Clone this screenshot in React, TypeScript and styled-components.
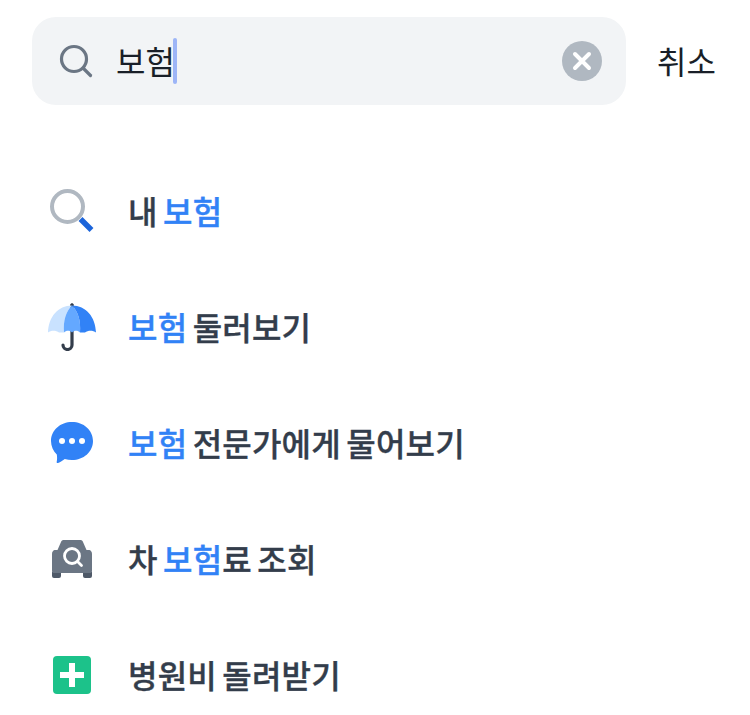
import styled, { createGlobalStyle } from 'styled-components';

const GlobalStyle = createGlobalStyle`
  html, body {
    margin: 0;
    background: #fff;
    overflow: hidden;
  }
  body {
    font-family: 'Noto Sans CJK KR', 'Noto Sans', sans-serif;
  }
`;

const BLUE = '#3182f6';

const LensIcon = () => (
  <svg width="48" height="48" viewBox="0 0 48 48">
    <circle cx="19.5" cy="19.5" r="15.5" fill="none" stroke="#b0b8c1" strokeWidth="4" />
    <path d="M32.5 32 L43.500 43" stroke="#1b64da" strokeWidth="5.500" />
  </svg>
);

const UmbrellaIcon = () => (
  <svg width="48" height="48" viewBox="0 0 48 48">
    <path d="M24 2 V42 a4.500 4.500 0 0 1 -9 0" fill="none" stroke="#333d4b" strokeWidth="3.200" strokeLinecap="round" />
    <circle cx="24" cy="1.800" r="1.600" fill="#333d4b" />
    <path d="M24 2.500 C10 2.500 0.500 14 0 29.500 C3 27 8 27 11 29.500 L16 29.500 C15 18 18 8 24 2.500 Z" fill="#c9e2ff" />
    <path d="M24 2.500 C18 8 15 18 16 29.500 C18 27 22 27 24 29.500 C26 27 30 27 32 29.500 C33 18 30 8 24 2.500 Z" fill="#64a8ff" />
    <path d="M24 2.500 C30 8 33 18 32 29.500 L37 29.500 C40 27 45 27 48 29.500 C47.500 14 38 2.500 24 2.500 Z" fill={BLUE} />
  </svg>
);

const ChatIcon = () => (
  <svg width="48" height="48" viewBox="0 0 48 48">
    <path d="M24 3 C35.500 3 45 11 45 22 C45 33 35.500 41 24 41 C21.500 41 19 40.600 16.800 40 C14.500 41.600 11.500 43.600 10 44 C9 44.300 8.500 43.600 8.700 42.800 C9.200 40.500 9.200 37.800 8.800 35.500 C5.300 32 3 27.300 3 22 C3 11 12.500 3 24 3 Z" fill={BLUE} />
    <circle cx="14" cy="22" r="3" fill="#fff" />
    <circle cx="24" cy="22" r="3" fill="#fff" />
    <circle cx="34" cy="22" r="3" fill="#fff" />
  </svg>
);

const CarIcon = () => (
  <svg width="48" height="48" viewBox="0 0 48 48">
    <path d="M4 37 H13 V41 a2 2 0 0 1 -2 2 H6 a2 2 0 0 1 -2 -2 Z M35 37 H44 V41 a2 2 0 0 1 -2 2 H37 a2 2 0 0 1 -2 -2 Z" fill="#4e5968" />
    <path d="M16 5 H32 C33.500 5 34.500 5.600 35 7 L38.500 15 H41.500 C43 15.500 44 17 44 19 V36 C44 37.500 43 38 42 38 H6 C5 38 4 37.500 4 36 V19 C4 17 5 15.500 6.500 15 H9.500 L13 7 C13.500 5.600 14.500 5 16 5 Z" fill="#6b7684" />
    <circle cx="24" cy="21" r="7.500" fill="none" stroke="#fff" strokeWidth="2.800" />
    <path d="M29.500 26.500 L33.500 30.500" stroke="#fff" strokeWidth="2.800" strokeLinecap="round" />
  </svg>
);

const PlusIcon = () => (
  <svg width="48" height="48" viewBox="0 0 48 48">
    <rect x="5" y="5" width="38" height="38" rx="4" fill="#1cc28a" />
    <rect x="12" y="21" width="24" height="6" fill="#fff" />
    <rect x="21" y="12" width="6" height="24" fill="#fff" />
  </svg>
);

const results = [
  { icon: <LensIcon />, parts: ['내 ', '보험', ''] },
  { icon: <UmbrellaIcon />, parts: ['', '보험', ' 둘러보기'] },
  { icon: <ChatIcon />, parts: ['', '보험', ' 전문가에게 물어보기'] },
  { icon: <CarIcon />, parts: ['차 ', '보험', '료 조회'] },
  { icon: <PlusIcon />, parts: ['병원비 돌려받기', '', ''] },
];

export default function App() {
  return (
    <Page>
      <GlobalStyle />
      <SearchHeader>
        <SearchBox>
          <svg width="40" height="40" viewBox="0 0 40 40">
            <circle cx="18" cy="18" r="12.500" fill="none" stroke="#6b7684" strokeWidth="3.200" />
            <path d="M27.500 27.500 L34.500 34.500" stroke="#6b7684" strokeWidth="3.200" strokeLinecap="round" />
          </svg>
          <Query>보험</Query>
          <Caret />
          <ClearButton>
            <svg width="40" height="40" viewBox="0 0 40 40">
              <circle cx="20" cy="20" r="20" fill="#b0b8c1" />
              <path d="M13 13 L27 27 M27 13 L13 27" stroke="#fff" strokeWidth="4" strokeLinecap="round" />
            </svg>
          </ClearButton>
        </SearchBox>
        <CancelButton>취소</CancelButton>
      </SearchHeader>
      <ResultList>
        {results.map(({ icon, parts }) => (
          <ResultRow key={parts.join('')}>
            <IconSlot>{icon}</IconSlot>
            <Label>
              {parts[0]}
              <Match>{parts[1]}</Match>
              {parts[2]}
            </Label>
          </ResultRow>
        ))}
      </ResultList>
    </Page>
  );
}

const Page = styled.div`
  width: 750px;
  height: 715px;
  overflow: hidden;
`;

const SearchHeader = styled.header`
  display: flex;
  align-items: center;
  padding: 17px 34px 0 32px;
`;

const SearchBox = styled.div`
  display: flex;
  align-items: center;
  flex: 1;
  height: 88px;
  padding: 0 24px;
  border-radius: 24px;
  background: #f2f4f6;
`;

const Query = styled.span`
  margin-left: 20px;
  padding-bottom: 2px;
  font-size: 32px;
  line-height: 44px;
  color: #191f28;
`;

const Caret = styled.span`
  width: 4px;
  height: 46px;
  margin-left: -2px;
  border-radius: 2px;
  background: #9db5f7;
`;

const ClearButton = styled.span`
  display: flex;
  margin-left: auto;
`;

const CancelButton = styled.span`
  margin-left: 31px;
  padding-bottom: 2px;
  font-size: 32px;
  line-height: 44px;
  color: #191f28;
`;

const ResultList = styled.ul`
  margin: 48px 0 0;
  padding: 0 0 0 48px;
  list-style: none;
`;

const ResultRow = styled.li`
  display: flex;
  align-items: center;
  gap: 32px;
  height: 116px;
`;

const IconSlot = styled.span`
  display: flex;
  width: 48px;
  height: 48px;
`;

const Label = styled.span`
  padding-bottom: 2px;
  font-size: 32px;
  font-weight: 500;
  line-height: 44px;
  letter-spacing: 0.2px;
  word-spacing: -2px;
  -webkit-text-stroke: 0.35px currentColor;
  color: #333d4b;
`;

const Match = styled.span`
  color: ${BLUE};
`;
